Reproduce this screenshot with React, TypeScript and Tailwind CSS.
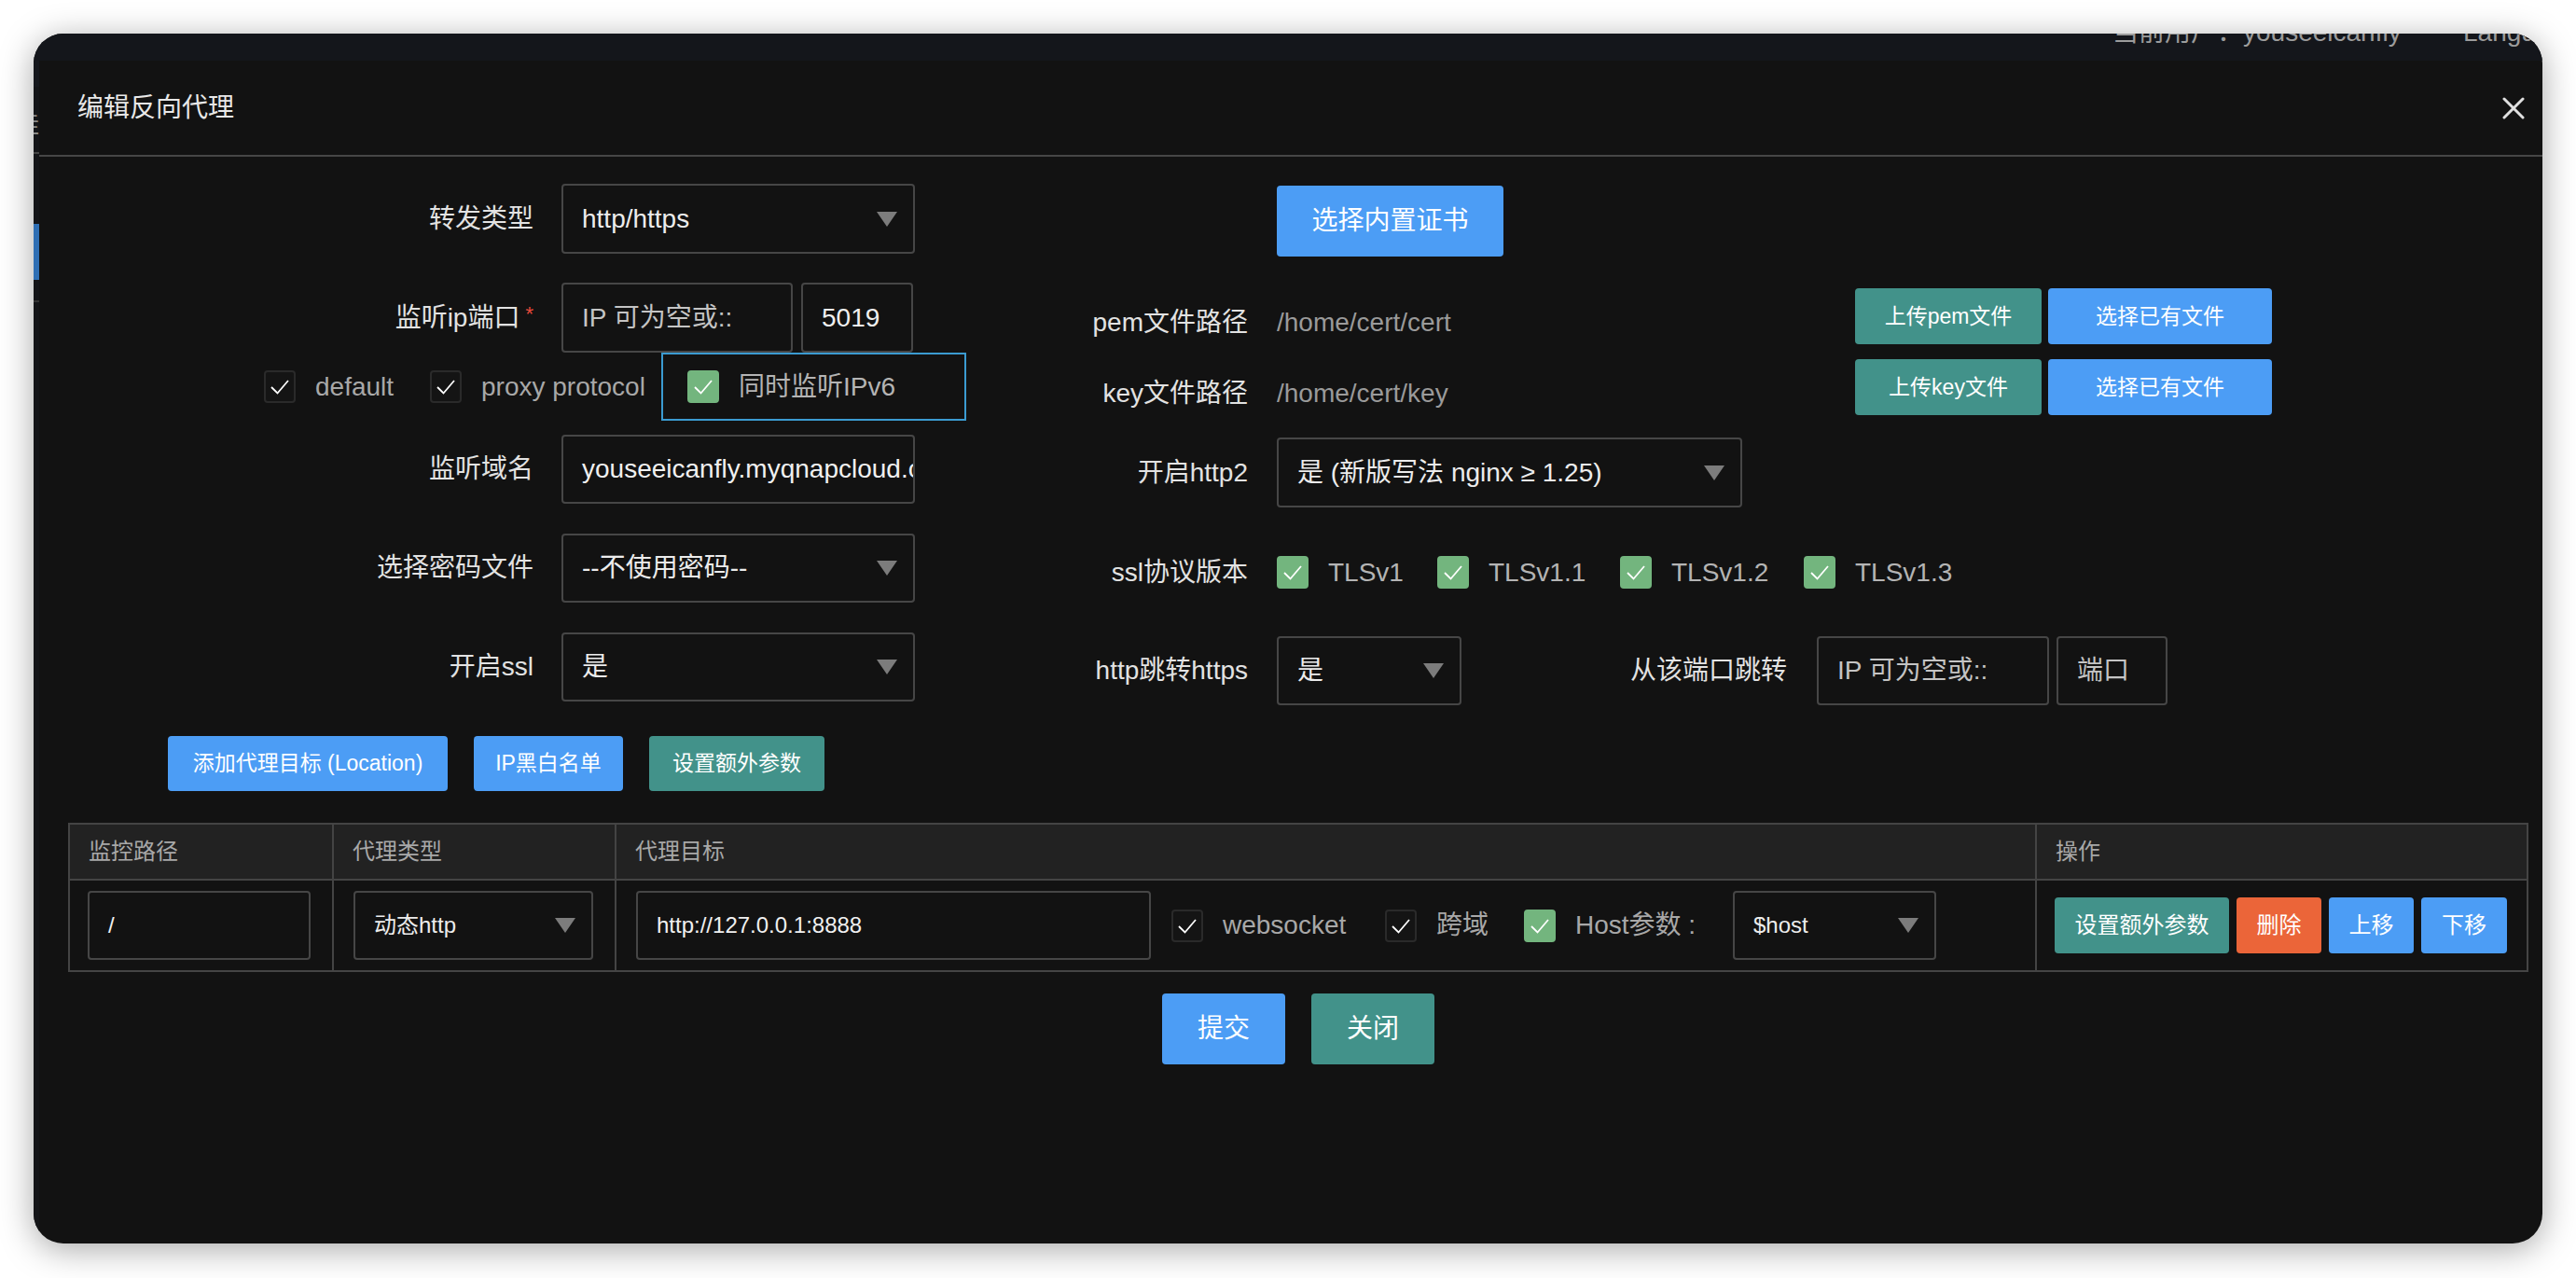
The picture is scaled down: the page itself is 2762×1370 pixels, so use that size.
import React from 'react';

const BLUE = 'bg-[#4c9df5]';
const TEAL = 'bg-[#42928a]';
const ORANGE = 'bg-[#eb6539]';

function Tri() {
  return (
    <svg width="22" height="16" viewBox="0 0 22 16" className="shrink-0">
      <polygon points="0,0 22,0 11,16" fill="#7c7c7c" />
    </svg>
  );
}

function Check({ on }: { on?: boolean }) {
  return (
    <div
      className={`w-[34px] h-[35px] shrink-0 rounded-[4px] border-2 flex items-center justify-center ${
        on ? 'bg-[#73b57e] border-[#73b57e]' : 'bg-[#141414] border-[#2a2a2a]'
      }`}
    >
      <svg width="30" height="31" viewBox="0 0 30 31">
        <polyline points="6,16 12.5,22.5 24,9" fill="none" stroke="#ffffff" strokeWidth="1.8" />
      </svg>
    </div>
  );
}

function Select({ w, h, text, small }: { w: string; h: string; text: string; small?: boolean }) {
  return (
    <div
      className={`${w} ${h} shrink-0 border-2 border-[#464646] rounded-[4px] flex items-center justify-between pl-[20px] pr-[17px] ${
        small ? 'text-[24px]' : 'text-[28px]'
      } text-[#ececec]`}
    >
      <span className="whitespace-nowrap">{text}</span>
      <Tri />
    </div>
  );
}

function Field({ w, h, text, muted, small }: { w: string; h: string; text: string; muted?: boolean; small?: boolean }) {
  return (
    <div
      className={`${w} ${h} shrink-0 border-2 border-[#464646] rounded-[4px] flex items-center pl-[20px] overflow-hidden whitespace-nowrap ${
        small ? 'text-[24px]' : 'text-[28px]'
      } ${muted ? 'text-[#c4c4c4]' : 'text-[#f0f0f0]'}`}
    >
      {text}
    </div>
  );
}

function Btn({ w, h, color, text, size }: { w: string; h: string; color: string; text: string; size: string }) {
  return (
    <div className={`${w} ${h} ${color} ${size} shrink-0 rounded-[4px] text-white flex items-center justify-center whitespace-nowrap`}>
      {text}
    </div>
  );
}

function LeftRow({ label, star, children, className = '' }: { label: string; star?: boolean; children: React.ReactNode; className?: string }) {
  return (
    <div className={`flex items-center ${className}`}>
      <div className="w-[560px] shrink-0 pr-[30px] text-right text-[28px] text-[#e2e2e2] whitespace-nowrap">
        {label}
        {star && <span className="text-[#e5493a] text-[22px] align-top ml-[6px]">*</span>}
      </div>
      {children}
    </div>
  );
}

function RightRow({ label, children, className = '', labelClass = '' }: { label: string; children: React.ReactNode; className?: string; labelClass?: string }) {
  return (
    <div className={`flex items-center ${className}`}>
      <div className={`w-[269px] shrink-0 pr-[31px] text-right text-[28px] text-[#e2e2e2] whitespace-nowrap ${labelClass}`}>{label}</div>
      {children}
    </div>
  );
}

function CheckItem({ on, label, className = '', labelClass = 'text-[#a8a8a8]' }: { on?: boolean; label: string; className?: string; labelClass?: string }) {
  return (
    <div className={`flex items-center shrink-0 ${className}`}>
      <Check on={on} />
      <span className={`ml-[21px] text-[28px] whitespace-nowrap ${labelClass}`}>{label}</span>
    </div>
  );
}

export default function App() {
  return (
    <div className="w-[2762px] h-[1370px] bg-white pl-[36px] pt-[36px] font-['Liberation_Sans','Noto_Sans_CJK_SC',sans-serif]">
      <div className="w-[2690px] h-[1297px] rounded-[32px] overflow-hidden bg-[#121212] flex flex-col shadow-[0_6px_36px_rgba(0,0,0,0.35)]">
        {/* page header behind the dialog */}
        <div className="h-[29px] shrink-0 bg-[#14161b] flex pl-[2229px] text-[28px] leading-[28px] text-[#9c9c9c] whitespace-nowrap">
          <span className="w-[376px] shrink-0 -mt-[15px]">当前用户：youseeicanfly</span>
          <span className="shrink-0 -mt-[15px]">Language</span>
        </div>

        <div className="flex flex-1 min-h-0">
          {/* sidebar peeking out */}
          <div className="w-[6px] shrink-0 bg-[#141518] flex flex-col overflow-hidden">
            <div className="h-[28px] bg-[#16181d]" />
            <div className="h-[70px] text-[26px] text-[#8a8a8a] -ml-[20px] pt-[26px] leading-[28px]">挂</div>
            <div className="h-[2px] bg-[#454545]" />
            <div className="h-[75px]" />
            <div className="h-[60px] bg-[#2f6fb4]" />
            <div className="h-[22px]" />
            <div className="h-[2px] bg-[#333]" />
          </div>

          <div className="flex-1 flex flex-col">
            {/* dialog header */}
            <div className="h-[103px] shrink-0 border-b-2 border-[#464646] flex items-center justify-between pl-[41px] pr-[19px]">
              <span className="text-[28px] text-[#e8e8e8]">编辑反向代理</span>
              <svg width="24" height="24" viewBox="0 0 24 24">
                <path d="M2 2 L22 22 M22 2 L2 22" stroke="#e0e0e0" strokeWidth="3" strokeLinecap="round" />
              </svg>
            </div>

            <div className="pt-[29px] flex flex-col">
              <div className="flex">
                {/* left column */}
                <div className="w-[1058px] shrink-0 flex flex-col">
                  <LeftRow label="转发类型">
                    <Select w="w-[379px]" h="h-[75px]" text="http/https" />
                  </LeftRow>
                  <LeftRow label="监听ip端口" star className="mt-[31px]">
                    <div className="flex gap-[9px]">
                      <Field w="w-[248px]" h="h-[75px]" text="IP 可为空或::" muted />
                      <Field w="w-[120px]" h="h-[75px]" text="5019" />
                    </div>
                  </LeftRow>
                  <div className="h-[73px] flex items-center pl-[241px]">
                    <CheckItem label="default" className="w-[178px]" />
                    <CheckItem label="proxy protocol" className="w-[248px]" />
                    <div className="w-[327px] h-[73px] shrink-0 border-2 border-[#3b9bd1] flex items-center pl-[26px]">
                      <CheckItem on label="同时监听IPv6" labelClass="text-[#b4b4b4]" />
                    </div>
                  </div>
                  <LeftRow label="监听域名" className="mt-[15px]">
                    <Field w="w-[379px]" h="h-[74px]" text="youseeicanfly.myqnapcloud.com" />
                  </LeftRow>
                  <LeftRow label="选择密码文件" className="mt-[32px]">
                    <Select w="w-[379px]" h="h-[74px]" text="--不使用密码--" />
                  </LeftRow>
                  <LeftRow label="开启ssl" className="mt-[32px]">
                    <Select w="w-[379px]" h="h-[74px]" text="是" />
                  </LeftRow>
                  <div className="mt-[37px] pl-[138px] flex gap-[28px]">
                    <Btn w="w-[300px]" h="h-[59px]" color={BLUE} size="text-[23px]" text="添加代理目标 (Location)" />
                    <Btn w="w-[160px]" h="h-[59px]" color={BLUE} size="text-[23px]" text="IP黑白名单" />
                    <Btn w="w-[188px]" h="h-[59px]" color={TEAL} size="text-[23px]" text="设置额外参数" />
                  </div>
                </div>

                {/* right column */}
                <div className="flex-1 flex flex-col pt-[2px]">
                  <div className="ml-[269px]">
                    <Btn w="w-[243px]" h="h-[76px]" color={BLUE} size="text-[28px]" text="选择内置证书" />
                  </div>
                  <RightRow label="pem文件路径" className="mt-[34px]" labelClass="pt-[14px]">
                    <div className="w-[620px] shrink-0 pt-[14px] text-[28px] text-[#9a9a9a]">/home/cert/cert</div>
                    <Btn w="w-[200px]" h="h-[60px]" color={TEAL} size="text-[23px]" text="上传pem文件" />
                    <div className="ml-[7px]">
                      <Btn w="w-[240px]" h="h-[60px]" color={BLUE} size="text-[23px]" text="选择已有文件" />
                    </div>
                  </RightRow>
                  <RightRow label="key文件路径" className="mt-[16px]" labelClass="pt-[14px]">
                    <div className="w-[620px] shrink-0 pt-[14px] text-[28px] text-[#9a9a9a]">/home/cert/key</div>
                    <Btn w="w-[200px]" h="h-[60px]" color={TEAL} size="text-[23px]" text="上传key文件" />
                    <div className="ml-[7px]">
                      <Btn w="w-[240px]" h="h-[60px]" color={BLUE} size="text-[23px]" text="选择已有文件" />
                    </div>
                  </RightRow>
                  <RightRow label="开启http2" className="mt-[24px]">
                    <Select w="w-[499px]" h="h-[75px]" text="是 (新版写法 nginx ≥ 1.25)" />
                  </RightRow>
                  <RightRow label="ssl协议版本" className="mt-[32px] h-[75px]">
                    <CheckItem on label="TLSv1" className="w-[172px]" labelClass="text-[#b4b4b4]" />
                    <CheckItem on label="TLSv1.1" className="w-[196px]" labelClass="text-[#b4b4b4]" />
                    <CheckItem on label="TLSv1.2" className="w-[197px]" labelClass="text-[#b4b4b4]" />
                    <CheckItem on label="TLSv1.3" labelClass="text-[#b4b4b4]" />
                  </RightRow>
                  <RightRow label="http跳转https" className="mt-[31px]">
                    <Select w="w-[198px]" h="h-[74px]" text="是" />
                    <div className="w-[381px] shrink-0 pr-[32px] text-right text-[28px] text-[#e2e2e2] whitespace-nowrap">从该端口跳转</div>
                    <div className="flex gap-[8px]">
                      <Field w="w-[249px]" h="h-[74px]" text="IP 可为空或::" muted />
                      <Field w="w-[119px]" h="h-[74px]" text="端口" muted />
                    </div>
                  </RightRow>
                </div>
              </div>

              {/* locations table */}
              <div className="ml-[31px] mt-[34px] w-[2638px] border-2 border-[#444]">
                <div className="grid grid-cols-[283px_303px_1523px_525px] h-[60px] bg-[#222] border-b-2 border-[#444] text-[24px] text-[#a8a8a8]">
                  <div className="border-r-2 border-[#444] flex items-center pl-[20px]">监控路径</div>
                  <div className="border-r-2 border-[#444] flex items-center pl-[20px]">代理类型</div>
                  <div className="border-r-2 border-[#444] flex items-center pl-[20px]">代理目标</div>
                  <div className="flex items-center pl-[20px]">操作</div>
                </div>
                <div className="grid grid-cols-[283px_303px_1523px_525px] h-[96px]">
                  <div className="border-r-2 border-[#444] flex items-center pl-[19px]">
                    <Field w="w-[239px]" h="h-[74px]" text="/" small />
                  </div>
                  <div className="border-r-2 border-[#444] flex items-center pl-[21px]">
                    <Select w="w-[257px]" h="h-[74px]" text="动态http" small />
                  </div>
                  <div className="border-r-2 border-[#444] flex items-center pl-[21px]">
                    <Field w="w-[552px]" h="h-[74px]" text="http://127.0.0.1:8888" small />
                    <CheckItem label="websocket" className="ml-[22px] w-[229px]" />
                    <CheckItem label="跨域" className="w-[149px]" />
                    <CheckItem on label="Host参数 :" className="w-[224px]" />
                    <Select w="w-[218px]" h="h-[74px]" text="$host" small />
                  </div>
                  <div className="flex items-center pl-[19px] gap-[8px]">
                    <Btn w="w-[187px]" h="h-[60px]" color={TEAL} size="text-[24px]" text="设置额外参数" />
                    <Btn w="w-[91px]" h="h-[60px]" color={ORANGE} size="text-[24px]" text="删除" />
                    <Btn w="w-[91px]" h="h-[60px]" color={BLUE} size="text-[24px]" text="上移" />
                    <Btn w="w-[92px]" h="h-[60px]" color={BLUE} size="text-[24px]" text="下移" />
                  </div>
                </div>
              </div>

              <div className="ml-[31px] w-[2638px] mt-[23px] flex justify-center gap-[28px]">
                <Btn w="w-[132px]" h="h-[76px]" color={BLUE} size="text-[28px]" text="提交" />
                <Btn w="w-[132px]" h="h-[76px]" color={TEAL} size="text-[28px]" text="关闭" />
              </div>
            </div>
          </div>
        </div>
      </div>
    </div>
  );
}
